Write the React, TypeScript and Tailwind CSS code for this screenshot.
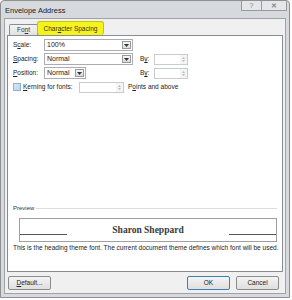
import React from 'react';

const ui = { fontFamily: '"Liberation Sans", Arial, sans-serif' };

const Arrow = () => (
  <svg width="5" height="3" viewBox="0 0 5 3">
    <path d="M0 0h5L2.5 3z" fill="#333" />
  </svg>
);

const Combo = ({ value, width }: { value: string; width: string }) => (
  <div className={`flex h-[12px] ${width} items-stretch border border-[#abadb3] bg-white`}>
    <span className="flex-1 pl-[2px] text-[7px] leading-[10px] text-[#222]">{value}</span>
    <span className="my-[1px] mr-[1px] flex w-[9px] items-center justify-center border border-[#9a9a9a] bg-gradient-to-b from-[#f6f6f6] to-[#dcdcdc]">
      <Arrow />
    </span>
  </div>
);

const Spin = ({ width }: { width: string }) => (
  <div className={`flex h-[11px] ${width} items-stretch border border-[#c8cbd0] bg-white`}>
    <span className="flex-1" />
    <span className="flex w-[7px] flex-col items-center justify-center gap-[1px] bg-[#f4f4f4]">
      <svg width="3" height="2" viewBox="0 0 3 2"><path d="M0 2h3L1.5 0z" fill="#bbb" /></svg>
      <svg width="3" height="2" viewBox="0 0 3 2"><path d="M0 0h3L1.5 2z" fill="#bbb" /></svg>
    </span>
  </div>
);

const Btn = ({ children, focus }: { children: React.ReactNode; focus?: boolean }) => (
  <button
    className={`flex h-[14px] w-[43px] items-center justify-center rounded-[2px] border bg-gradient-to-b from-[#f4f4f4] to-[#dedede] text-[6.5px] text-[#222] ${
      focus ? 'border-[#3c7fb1]' : 'border-[#8c8c8c]'
    }`}
  >
    {children}
  </button>
);

export default function App() {
  return (
    <div className="h-[300px] w-[292px] overflow-hidden bg-white" style={ui}>
      <div className="flex h-[298px] w-[290px] flex-col rounded-t-[4px] border border-[#8f8f8f] bg-[#d6d9dd] px-[3px] pb-[3px]">
        {/* title bar */}
        <div className="flex h-[17px] items-start justify-between">
          <span className="pl-[1px] pt-[4px] text-[7.5px] text-[#222]">Envelope Address</span>
          <div className="mr-[-1px] flex h-[10px] border border-t-0 border-[#9a9a9a] bg-[#e4e6e9] text-[7px] leading-[9px] text-[#888]">
            <span className="flex w-[20px] items-center justify-center border-r border-[#9a9a9a]">?</span>
            <span className="flex w-[24px] items-center justify-center font-bold">✕</span>
          </div>
        </div>

        {/* body */}
        <div className="flex flex-1 flex-col border border-[#9ea3a8] bg-[#f0f0f0] px-[2px] pt-[2px]">
          {/* tabs */}
          <div className="flex h-[14px] items-end pl-[2px]">
            <div className="flex h-[11px] w-[29px] items-center justify-center rounded-t-[2px] border border-b-0 border-[#898c95] bg-gradient-to-b from-[#f4f4f4] to-[#e2e2e2] text-[6.5px] text-[#333]">
              Fo<span className="underline">n</span>t
            </div>
            <div className="ml-[-1px] flex h-[14px] w-[67px] items-center justify-center rounded-[3px] border border-b-0 border-[#c9c200] bg-[#f5f31c] text-[6.5px] text-[#333]">
              Char<span className="underline">a</span>cter Spacing
            </div>
          </div>

          {/* panel */}
          <div className="flex h-[237px] flex-col border border-[#898c95] bg-white px-[5px] pt-[3px] text-[6.5px] text-[#222]">
            <div className="flex flex-col gap-[2px]">
              <div className="flex h-[12px] items-center">
                <span className="w-[31px]">S<span className="underline">c</span>ale:</span>
                <Combo value="100%" width="w-[89px]" />
              </div>
              <div className="flex h-[12px] items-center">
                <span className="w-[31px]"><span className="underline">S</span>pacing:</span>
                <Combo value="Normal" width="w-[89px]" />
                <span className="ml-[7px] w-[14px]">B<span className="underline">y</span>:</span>
                <Spin width="w-[34px]" />
              </div>
              <div className="flex h-[12px] items-center">
                <span className="w-[31px]"><span className="underline">P</span>osition:</span>
                <Combo value="Normal" width="w-[42px]" />
                <span className="ml-[54px] w-[14px]">B<span className="underline">y</span>:</span>
                <Spin width="w-[34px]" />
              </div>
              <div className="flex h-[12px] items-center">
                <span className="h-[8px] w-[8px] border border-[#8eb0d3] bg-gradient-to-br from-[#dbe8f5] to-[#b9d1ea]" />
                <span className="ml-[2px] w-[56px]"><span className="underline">K</span>erning for fonts:</span>
                <Spin width="w-[45px]" />
                <span className="ml-[4px]">P<span className="underline">o</span>ints and above</span>
              </div>
            </div>

            <div className="flex-1" />

            {/* preview */}
            <div className="flex items-center gap-[2px]">
              <span className="text-[6px] text-[#333]">Preview</span>
              <span className="h-px flex-1 bg-[#dcdcdc]" />
            </div>
            <div className="ml-[6px] mt-[5px] flex h-[24px] items-end border border-[#a0a0a0] pb-[6px]">
              <span className="h-px w-[47px] bg-[#555]" />
              <span
                className="flex-1 text-center text-[9.5px] font-bold leading-[10px] text-[#3a3a3a]"
                style={{ fontFamily: '"Liberation Serif", "DejaVu Serif", serif' }}
              >
                Sharon Sheppard
              </span>
              <span className="h-px w-[47px] bg-[#555]" />
            </div>
            <div className="mt-[1px] h-[28px] whitespace-nowrap text-[6.5px] text-[#222]">
              This is the heading theme font. The current document theme defines which font will be used.
            </div>
          </div>

          {/* buttons */}
          <div className="flex flex-1 items-center justify-between px-[1px] pt-[1px]">
            <Btn>
              <span className="underline">D</span>efault...
            </Btn>
            <div className="flex gap-[6px] pr-[3px]">
              <Btn focus>OK</Btn>
              <Btn>Cancel</Btn>
            </div>
          </div>
        </div>
      </div>
    </div>
  );
}
